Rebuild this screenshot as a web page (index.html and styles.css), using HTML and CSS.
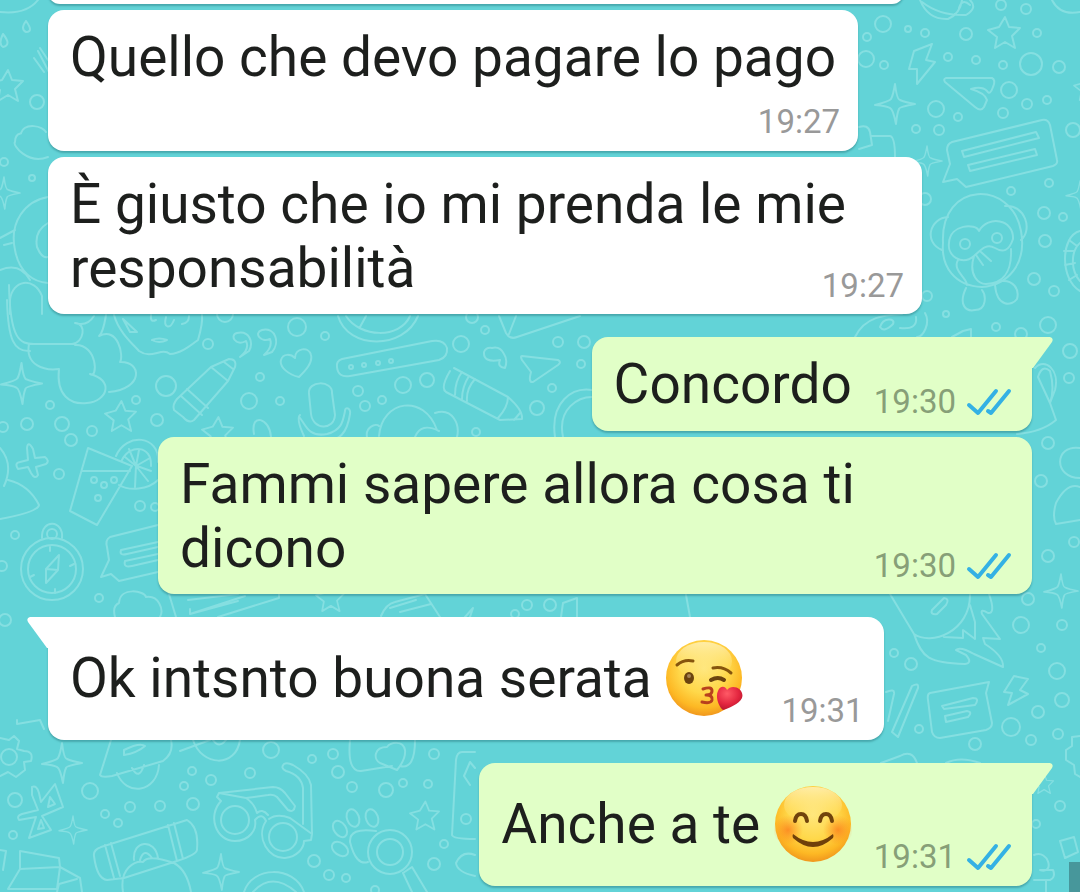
FILE: index.html
```html
<!DOCTYPE html>
<html lang="it">
<head>
<meta charset="utf-8">
<meta name="viewport" content="width=device-width, initial-scale=1">
<title>Chat</title>
<link rel="stylesheet" href="styles.css">
</head>
<body>
<svg class="defs" aria-hidden="true">
  <defs>
    <radialGradient id="face" cx="50%" cy="38%" r="64%">
      <stop offset="0" stop-color="#ffe67c"/><stop offset=".5" stop-color="#ffd84a"/><stop offset=".8" stop-color="#fdb824"/><stop offset="1" stop-color="#ee911c"/>
    </radialGradient>
    <linearGradient id="shine" x1="0" y1="0" x2="0" y2="1">
      <stop offset="0" stop-color="#fff3c0" stop-opacity=".8"/><stop offset="1" stop-color="#ffe671" stop-opacity="0"/>
    </linearGradient>
    <radialGradient id="blush"><stop offset="0" stop-color="#fb7a1c" stop-opacity=".75"/><stop offset="1" stop-color="#fb8a1c" stop-opacity="0"/></radialGradient>
    <radialGradient id="heart" cx="40%" cy="30%" r="75%"><stop offset="0" stop-color="#ff5a66"/><stop offset=".6" stop-color="#e3263f"/><stop offset="1" stop-color="#b5152c"/></radialGradient>
    <symbol id="ticks" viewBox="0 0 46 30"><path d="M3 18L12 26L30 4M22 24L25 26L43 4" fill="none" stroke="#34b1e4" stroke-width="4" stroke-linecap="round" stroke-linejoin="round"/></symbol>
    <symbol id="sparkle" viewBox="-20 -20 40 40" overflow="visible"><path d="M0-20Q2-4 5-4Q9-2 20 0Q4 3 4 5Q2 9 1 20Q-2 5-5 4Q-8 2-20 1Q-5-3-4-5Q-2-8 0-20Z"/></symbol>
    <symbol id="star" viewBox="-16 -16 32 32" overflow="visible"><path d="M1-16L5-6L16-5L8 3L11 15L1 9L-9 15L-7 4L-16-3L-5-6Z"/></symbol>
  </defs>
</svg>

<main class="chat">
  <svg class="wallpaper" viewBox="0 0 1080 892" preserveAspectRatio="xMinYMin slice" aria-hidden="true">
    <g class="dots">
      <circle cx="883" cy="24" r="8"/><circle cx="867" cy="37" r="4"/><circle cx="908" cy="29" r="3"/><circle cx="925" cy="33" r="4"/><circle cx="866" cy="59" r="8"/><circle cx="884" cy="65" r="4"/><circle cx="948" cy="57" r="4"/><circle cx="966" cy="34" r="6"/><circle cx="976" cy="60" r="4"/><circle cx="1001" cy="5" r="5"/><circle cx="1026" cy="9" r="5"/><circle cx="1037" cy="33" r="4"/><circle cx="1031" cy="64" r="11"/><circle cx="1059" cy="67" r="6"/><circle cx="1003" cy="65" r="4"/><circle cx="1009" cy="90" r="8"/><circle cx="1027" cy="104" r="5"/><circle cx="1047" cy="100" r="4"/><circle cx="1003" cy="113" r="5"/><circle cx="936" cy="109" r="8"/><circle cx="958" cy="117" r="4"/><circle cx="916" cy="129" r="4"/><circle cx="939" cy="130" r="5"/><circle cx="1073" cy="130" r="7"/><circle cx="1049" cy="183" r="4"/><circle cx="1011" cy="191" r="4"/><circle cx="925" cy="199" r="6"/><circle cx="1044" cy="213" r="6"/><circle cx="1063" cy="217" r="4"/><circle cx="1045" cy="241" r="6"/><circle cx="1034" cy="279" r="6"/><circle cx="1054" cy="291" r="5"/><circle cx="927" cy="296" r="5"/><circle cx="946" cy="314" r="3"/><circle cx="996" cy="327" r="4"/><circle cx="1021" cy="334" r="6"/><circle cx="1048" cy="325" r="8"/>
      <circle cx="37" cy="102" r="7"/><circle cx="4" cy="162" r="4"/><circle cx="32" cy="178" r="3"/><circle cx="208" cy="344" r="5"/><circle cx="225" cy="314" r="8"/><circle cx="297" cy="327" r="9"/><circle cx="325" cy="336" r="4"/><circle cx="166" cy="386" r="10"/><circle cx="260" cy="377" r="4"/><circle cx="249" cy="401" r="8"/><circle cx="280" cy="401" r="4"/><circle cx="50" cy="405" r="4"/><circle cx="136" cy="400" r="4"/><circle cx="157" cy="420" r="6"/><circle cx="62" cy="424" r="7"/><circle cx="27" cy="424" r="6"/><circle cx="3" cy="427" r="5"/><circle cx="92" cy="431" r="5"/><circle cx="71" cy="440" r="6"/><circle cx="59" cy="474" r="5"/><circle cx="94" cy="480" r="3"/><circle cx="104" cy="485" r="3"/><circle cx="114" cy="480" r="3"/><circle cx="98" cy="498" r="3"/><circle cx="140" cy="506" r="5"/><circle cx="155" cy="507" r="4"/><circle cx="15" cy="535" r="4"/><circle cx="2" cy="566" r="5"/><circle cx="99" cy="598" r="4"/><circle cx="5" cy="620" r="6"/>
      <circle cx="461" cy="344" r="8"/><circle cx="485" cy="330" r="4"/><circle cx="472" cy="317" r="6"/><circle cx="558" cy="342" r="5"/><circle cx="584" cy="342" r="6"/><circle cx="581" cy="364" r="4"/><circle cx="552" cy="388" r="4"/><circle cx="537" cy="408" r="7"/><circle cx="476" cy="432" r="4"/><circle cx="403" cy="385" r="8"/><circle cx="427" cy="380" r="7"/><circle cx="358" cy="391" r="5"/><circle cx="382" cy="400" r="4"/><circle cx="365" cy="406" r="5"/><circle cx="527" cy="605" r="5"/><circle cx="550" cy="605" r="6"/><circle cx="515" cy="614" r="4"/>
      <circle cx="1070" cy="351" r="7"/><circle cx="1069" cy="378" r="5"/><circle cx="1048" cy="443" r="6"/><circle cx="1041" cy="481" r="6"/><circle cx="1048" cy="556" r="6"/><circle cx="1074" cy="542" r="5"/><circle cx="1028" cy="599" r="6"/><circle cx="1021" cy="625" r="8"/><circle cx="1062" cy="625" r="5"/><circle cx="1041" cy="648" r="4"/><circle cx="1057" cy="671" r="8"/><circle cx="1062" cy="700" r="7"/><circle cx="1038" cy="712" r="6"/><circle cx="1011" cy="727" r="9"/><circle cx="1031" cy="740" r="5"/><circle cx="1058" cy="734" r="5"/><circle cx="975" cy="744" r="6"/><circle cx="919" cy="729" r="4"/><circle cx="894" cy="653" r="4"/><circle cx="911" cy="664" r="6"/><circle cx="1060" cy="806" r="5"/><circle cx="1036" cy="824" r="4"/>
      <circle cx="9" cy="757" r="8"/><circle cx="15" cy="800" r="7"/><circle cx="13" cy="835" r="4"/><circle cx="90" cy="791" r="8"/><circle cx="105" cy="814" r="4"/><circle cx="118" cy="823" r="4"/><circle cx="130" cy="807" r="5"/><circle cx="160" cy="806" r="5"/><circle cx="193" cy="804" r="6"/><circle cx="184" cy="786" r="4"/><circle cx="192" cy="771" r="4"/><circle cx="211" cy="780" r="5"/><circle cx="250" cy="773" r="5"/><circle cx="271" cy="750" r="8"/><circle cx="312" cy="759" r="4"/><circle cx="333" cy="754" r="5"/><circle cx="338" cy="772" r="6"/><circle cx="352" cy="787" r="5"/><circle cx="386" cy="790" r="7"/><circle cx="403" cy="783" r="4"/><circle cx="428" cy="784" r="4"/><circle cx="434" cy="754" r="5"/><circle cx="466" cy="819" r="5"/><circle cx="444" cy="844" r="4"/><circle cx="434" cy="864" r="6"/><circle cx="314" cy="861" r="6"/><circle cx="329" cy="875" r="5"/><circle cx="346" cy="878" r="4"/><circle cx="375" cy="890" r="4"/>
    </g>
    <use href="#sparkle" x="875" y="84" width="40" height="40"/><use href="#sparkle" x="912" y="144" width="30" height="34"/><use href="#sparkle" x="1" y="363" width="41" height="41"/><use href="#sparkle" x="1044" y="574" width="34" height="34"/><use href="#sparkle" x="42" y="743" width="40" height="40"/><use href="#sparkle" x="59" y="816" width="28" height="28"/><use href="#sparkle" x="203" y="854" width="36" height="36"/><use href="#sparkle" x="-12" y="177" width="32" height="32"/><use href="#sparkle" x="1066" y="180" width="28" height="30"/>
    <use href="#star" x="988" y="17" width="32" height="32"/><use href="#star" x="-9" y="70" width="32" height="32"/><use href="#star" x="105" y="401" width="31" height="31"/><use href="#star" x="202" y="417" width="31" height="31"/><use href="#star" x="410" y="801" width="29" height="30"/><use href="#star" x="316" y="584" width="28" height="28"/><use href="#star" x="1074" y="75" width="26" height="26"/><use href="#star" x="1030" y="774" width="27" height="20"/>
    <g>
      <path d="M920 0Q928 20 948 19Q960 14 962 0M922 2Q940 16 966 15Q978 8 970 0M959 8Q962-2 970 5"/>
      <path d="M1052 0Q1060 16 1080 12M932 44L914 51L909 69L917 69L917 84L935 62L926 60Z"/>
      <path d="M946 78H992Q996 80 993 87Q990 96 987 91Q982 86 971 89Q985 93 987 100L984 107Q981 112 975 107L945 82Q943 79 946 78"/>
      <path d="M952 142L1042 120Q1048 119 1050 125L1057 160Q1058 164 1053 166L966 187L957 179L943 182L950 164L947 150Q947 144 952 142M962 151L1036 132L1039 138L964 157ZM968 165L1035 149L1037 155L970 171Z"/>
      <path d="M859 127Q868 124 870 132L872 145L859 149M872 136H890Q895 137 895 157"/>
      <path d="M943 243C940 180 1012 180 1021 231C1027 264 1008 285 982 287C955 286 941 267 943 243M948 217C930 218 923 242 942 250M1005 206C1025 204 1033 230 1021 240M949 243C950 224 976 223 979 231C988 215 1014 219 1013 239C1009 251 1003 253 995 248C986 243 981 250 974 256C962 266 947 256 949 243M974 256C968 276 979 284 986 284C1004 283 1012 272 1011 249M958 260C952 270 967 278 967 285M976 255L983 265M981 252L991 261"/><circle cx="965" cy="244" r="5"/><circle cx="997" cy="238" r="5"/>
      <path d="M966 288C958 305 966 312 975 310C987 310 986 295 982 290M995 285C997 308 1012 306 1017 299C1020 288 1012 280 1002 281"/>
      <path d="M855 337C865 316 886 315 902 314M925 313C931 323 923 337 917 337M880 327C883 317 896 318 893 324Q884 333 880 327M900 328Q918 330 916 317M952 337L963 331L971 329V337"/>
      <path d="M1080 231C1060 236 1060 280 1080 291M1080 243C1070 252 1071 271 1080 281M1064 251H1074M1065 265L1075 263M1069 280L1077 275M1069 240L1077 246"/>
      <path d="M0 12Q26 15 38 0M26 21Q20 29 26 32Q34 32 26 21M3 34Q-2 44 3 47Q12 45 3 34M38 51L50 74M34 58L44 72M40 48L48 60"/>
      <path d="M48 157C28 165 12 145 15 142C15 132 22 134 21 133C25 122 43 126 46 132M48 197C25 201 9 222 15 250C19 272 33 282 48 283M48 223Q34 231 37 247Q42 259 48 257M0 238L15 230M4 245L12 243M0 270Q20 262 30 280M10 314V300C12 280 34 276 42 296V314"/>
      <path d="M7 300C8 340 14 352 30 351M9 285C10 340 20 344 34 344H72C84 343 87 323 75 323Q87 327 94 316M29 344C25 365 44 371 59 369C56 395 70 405 87 403C108 401 114 380 90 374C98 380 98 344 75 345M106 315Q103 333 99 336C118 326 124 356 120 362C142 361 144 389 109 392"/>
      <path d="M114 315C119 333 134 345 139 351C152 360 161 347 170 354C180 354 190 346 198 340Q203 323 202 315M123 319L137 332L130 332ZM151 315Q150 323 156 320M166 317C163 328 170 330 174 320M182 324Q189 323 189 316M152 340Q159 337 167 340Q159 344 152 340"/>
      <path d="M240 357Q250 349 246 341C236 347 229 335 237 333C249 330 254 342 249 351ZM264 355Q273 347 270 339C261 343 253 333 262 330C276 327 280 343 272 352ZM299 377C289 375 279 367 281 360C283 353 291 354 295 358C295 348 309 346 311 355C313 363 305 371 299 377Z"/>
      <path d="M211 367L229 359Q237 359 235 367L228 381L194 420Q189 424 183 417L174 410Q172 405 177 399ZM211 367L228 381M181 396L202 415M187 389L208 408M224 362L233 369"/>
      <path d="M338 316C348 350 404 350 418 316M346 316C360 338 400 339 410 316M366 316L360 327M499 316L506 333Q510 340 517 337L580 316M516 316L509 334"/>
      <path d="M342 359L432 341Q444 339 447 348Q448 357 439 360L350 376Q338 378 337 367Q336 361 342 359"/><circle cx="351" cy="367" r="2"/><circle cx="364" cy="365" r="2"/><circle cx="378" cy="363" r="2"/><circle cx="391" cy="361" r="2"/>
      <path d="M492 348Q500 346 504 354Q508 360 505 368Q497 367 500 360Q483 363 484 352Q486 347 492 348M522 356L558 360Q562 362 558 365L533 382Q528 383 531 372L522 360Q520 356 522 356Z"/>
      <path d="M454 368L508 397Q523 410 522 419L500 420L446 392Q440 388 450 371M462 372Q455 381 455 395M469 376Q462 387 462 399M475 379Q466 389 467 401M508 397Q508 407 498 418M520 413L514 420"/>
      <path d="M309 394C307 380 333 380 332 393L335 415C334 431 313 430 311 414ZM299 417C305 422 307 438 327 434C342 430 343 421 345 411C345 406 351 408 350 414C347 434 339 440 326 442M300 415Q296 419 304 436"/>
      <path d="M379 436C382 400 424 393 437 430M367 437C365 427 376 423 379 426M435 413C453 407 460 425 457 437M415 437Q421 422 439 431M254 434C250 412 270 418 271 437M555 437C550 402 572 387 592 390M563 437C557 408 579 397 592 397"/>
      <path d="M88 448L132 466L97 525L70 511ZM82 471H130M116 456C126 432 160 435 158 462M122 460C130 444 152 445 151 466M119 485C129 491 148 490 158 480M137 466L151 471M136 466L150 458M136 466L139 450M136 466L129 449M136 466L148 481M136 466L135 487M136 466L125 457"/>
      <path d="M27 448Q28 440 33 449L35 458L45 457Q50 461 46 464L36 467L38 475Q35 480 31 473L28 467L18 469Q14 463 20 462L28 460ZM0 448Q14 464 4 486M8 480Q29 485 39 505Q38 512 0 519"/>
      <circle cx="52" cy="569" r="31"/><circle cx="52" cy="569" r="24"/><circle cx="52" cy="534" r="5"/><path d="M42 538C41 518 64 520 62 538M59 555L46 569V583L58 570ZM46 569L58 570M50 547V551M55 589V593M30 577L34 575M70 566L74 564"/>
      <path d="M158 525L110 537Q105 540 107 547L109 560L101 577L111 574L119 581L158 572M158 542L121 550Q119 556 127 554L158 547M158 554L125 561Q123 568 132 566L158 560"/>
      <path d="M115 617Q112 606 119 603C120 586 145 591 146 597C159 595 164 610 160 617M169 594L176 617M188 600L238 594M190 609L190 614L245 596M190 614L238 601M218 617L279 598V594M381 616Q386 604 395 602L425 594L440 617M416 600L390 608M400 612L431 604M465 617L473 608L470 617M561 617L563 603L577 598V617M686 595L690 617"/>
      <path d="M890 594L914 634C931 646 970 632 970 595M914 634C922 658 929 663 965 664Q973 663 966 655L956 650Q960 646 974 654L1003 667Q1004 656 985 644L983 638L1000 639L982 614Q980 608 988 613Q996 614 989 594M970 605L975 622V639L963 630V638L944 637M932 610L944 598Q950 599 946 605L937 614Q930 615 932 610"/>
      <path d="M886 692Q895 688 894 694L888 721M892 732L912 686Q919 682 918 688L898 737ZM930 693L989 682L986 693L992 723Q992 728 986 730L940 738Q934 738 932 732L928 700Q927 694 930 693M942 706L973 698Q980 698 975 705L944 709ZM945 716L967 711Q973 712 968 717L946 722ZM1014 676L1004 692L1012 693L1008 705L1028 694L1020 690L1028 679Z"/>
      <path d="M1080 736L1072 737V746L1066 750V760L1074 765L1075 774L1080 777M1060 841L1074 837L1078 852L1065 858ZM1034 855C1049 849 1055 875 1040 870H1053Q1056 877 1050 880H1034M1046 880V892M881 763L900 756Q912 749 917 763M946 763Q960 756 980 763M1035 368C1045 357 1060 370 1055 390L1050 403L1056 420Q1042 432 1017 434M1038 377Q1042 364 1050 371Q1055 389 1050 403ZM1080 448C1054 444 1053 478 1080 478M1080 487Q1067 482 1056 503Q1052 517 1056 524L1080 520"/>
      <path d="M0 738L9 740L14 736L19 741L17 749L24 751Q34 751 31 761L24 762L25 770L16 777L8 772L0 776M17 720V724L40 720L44 729"/>
      <path d="M32 787Q37 785 39 793L41 802L55 784L63 807L42 816L51 830L29 838L36 817L19 820Q16 816 22 814L38 810L32 795ZM50 797L55 804L48 807ZM41 820L44 828L38 829Z"/>
      <path d="M111 740L100 775Q102 778 112 776L163 761Q174 753 171 740M117 773C126 797 157 793 159 765M132 768Q139 781 144 765M124 750Q140 742 145 746Q137 753 124 755ZM180 751L210 740M193 740C202 767 236 768 240 740M213 740Q219 749 226 740"/>
      <path d="M350 740Q347 772 361 771L392 766M415 740Q415 770 400 766M387 747C374 747 373 759 380 763L397 770Q406 759 405 750C403 740 391 742 387 747Z"/>
      <circle cx="235" cy="820" r="14"/><circle cx="283" cy="837" r="14"/>
      <path d="M221 801L217 797L219 793L246 798Q254 803 257 813Q262 808 268 815M221 801C207 816 216 841 235 841C249 841 257 830 255 820Q262 812 266 821C255 838 269 859 285 858C297 857 304 848 304 841L311 840L312 834L290 818Q277 813 269 819M219 793L273 787Q280 787 285 793L295 806Q294 813 288 810L277 797Q274 794 268 795L246 798M284 764Q287 762 293 765Q309 774 311 785L312 834M284 764Q280 768 286 771Q301 775 303 788V824"/>
      <path d="M101 847L187 820Q199 827 197 849Q198 854 177 861L124 878L107 880Q97 879 94 856Q93 850 101 847M105 845L114 878M111 843L120 876M168 825L177 861M174 823L183 859M134 860C132 840 155 838 158 858M140 860Q144 847 152 858M123 892C119 867 136 861 143 862Q148 854 174 863Q187 870 191 892"/>
      <path d="M20 860V851L59 858L60 867L20 869ZM20 869L8 889H57L60 867L80 878L82 892M57 892L59 884L77 879M0 850L6 851L3 870"/>
      <circle cx="390" cy="852" r="22"/><circle cx="390" cy="852" r="13"/>
      <ellipse cx="353" cy="818" rx="6" ry="9" transform="rotate(-20 353 818)"/><ellipse cx="372" cy="818" rx="6" ry="9" transform="rotate(-20 372 818)"/><ellipse cx="340" cy="829" rx="6" ry="9" transform="rotate(-35 340 829)"/><ellipse cx="340" cy="849" rx="6" ry="9" transform="rotate(-55 340 849)"/>
      <path d="M376 831Q349 827 350 842Q356 866 368 862M403 873L412 867L427 892M403 873L412 892M244 892C252 866 294 865 304 892M253 892Q272 871 296 892M475 752H462Q457 752 456 760L452 835Q453 839 475 839M470 785L464 776L470 762L475 768M475 855Q462 850 456 863Q457 872 475 876"/>
    </g>
  </svg>

  <div class="bubble in previous"></div>

  <article class="bubble in stacked">
    <p class="text">Quello che devo pagare lo pago</p>
    <footer class="meta"><time datetime="19:27">19:27</time></footer>
  </article>

  <article class="bubble in wrapped">
    <p class="text">È giusto che io mi prenda le mie responsabilità</p>
    <footer class="meta"><time datetime="19:27">19:27</time></footer>
  </article>

  <article class="bubble out first">
    <svg class="tail" viewBox="0 0 21 32" aria-hidden="true"><path d="M0 0H18Q22 1 20 5L1 31H0Z"/></svg>
    <p class="text">Concordo</p>
    <footer class="meta"><time datetime="19:30">19:30</time><svg class="ticks" role="img" aria-label="Letto"><use href="#ticks"/></svg></footer>
  </article>

  <article class="bubble out wrapped">
    <p class="text">Fammi sapere allora cosa ti dicono</p>
    <footer class="meta"><time datetime="19:30">19:30</time><svg class="ticks" role="img" aria-label="Letto"><use href="#ticks"/></svg></footer>
  </article>

  <article class="bubble in first">
    <svg class="tail" viewBox="0 0 21 32" aria-hidden="true"><path d="M21 0H3Q-1 1 1 5L20 31H21Z"/></svg>
    <p class="text">Ok intsnto buona serata <svg class="emoji" viewBox="0 0 78 78" role="img" aria-label="Faccina che manda un bacio">
      <circle cx="39" cy="39" r="38" fill="url(#face)"/><ellipse cx="39" cy="22" rx="28" ry="19" fill="url(#shine)"/>
      <path d="M12 26Q19 20 28 22M48 29Q58 27 66 34" fill="none" stroke="#86550d" stroke-width="3" stroke-linecap="round"/>
      <ellipse cx="24" cy="39" rx="5" ry="6" fill="#6b430f"/><circle cx="24" cy="37" r="2" fill="#a58357"/>
      <path d="M46 41Q53 37 59 41" fill="none" stroke="#6b430f" stroke-width="4" stroke-linecap="round"/>
      <path d="M38 50Q47 47 47 52Q47 56 41 56Q48 56 47 61Q46 65 37 63" fill="none" stroke="#b8401d" stroke-width="3" stroke-linecap="round" stroke-linejoin="round"/>
      <path d="M62 51C67 44 80 50 77 59C74 65 64 69 58 71C54 68 50 58 53 52C55 46 61 47 62 51Z" fill="url(#heart)"/>
    </svg></p>
    <footer class="meta"><time datetime="19:31">19:31</time></footer>
  </article>

  <article class="bubble out first">
    <svg class="tail" viewBox="0 0 21 32" aria-hidden="true"><path d="M0 0H18Q22 1 20 5L1 31H0Z"/></svg>
    <p class="text">Anche a te <svg class="emoji" viewBox="0 0 78 78" role="img" aria-label="Faccina sorridente">
      <circle cx="39" cy="39" r="38" fill="url(#face)"/><ellipse cx="39" cy="20" rx="29" ry="18" fill="url(#shine)"/>
      <circle cx="14" cy="45" r="15" fill="url(#blush)"/><circle cx="64" cy="45" r="15" fill="url(#blush)"/>
      <path d="M21 36Q22 29 27 29Q32 29 33 36M46 36Q47 29 52 29Q57 29 58 36" fill="none" stroke="#70430c" stroke-width="4" stroke-linecap="round"/>
      <path d="M19 49Q39 65 59 49Q60 51 59 53Q39 71 19 53Q18 51 19 49Z" fill="#70400a"/>
    </svg></p>
    <footer class="meta"><time datetime="19:31">19:31</time><svg class="ticks" role="img" aria-label="Letto"><use href="#ticks"/></svg></footer>
  </article>

  <span class="overlay-edge"></span>
</main>
</body>
</html>
```
FILE: styles.css
```css
* {
  box-sizing: border-box;
}

body {
  margin: 0;
  background: #62d3d7;
  font-family: Roboto, sans-serif;
}

.defs {
  position: absolute;
  width: 0;
  height: 0;
}

.chat {
  position: relative;
  display: flex;
  flex-direction: column;
  align-items: flex-start;
  gap: 6px;
  min-height: 100vh;
  padding: 0 48px 5px;
  overflow: hidden;
}

.wallpaper {
  position: absolute;
  inset: 0;
  width: 100%;
  height: 100%;
  fill: none;
  stroke: #85dfe1;
  stroke-width: 2px;
  stroke-linejoin: round;
  stroke-linecap: round;
}

.bubble {
  --fill: #ffffff;
  position: relative;
  display: flex;
  align-items: flex-end;
  gap: 16px;
  max-width: min(874px, 100%);
  padding: 15px 20px 10px 0;
  border-radius: 16px;
  background: var(--fill);
  box-shadow: 0 2px 2px rgba(20, 90, 95, 0.35);
}

.out {
  --fill: #e1ffc7;
  align-self: flex-end;
  gap: 0;
}

.previous {
  width: 87%;
  height: 24px;
  margin-top: -20px;
  padding: 0;
}

.first {
  margin-top: 17px;
}

.first.out {
  border-top-right-radius: 0;
}

.first.in {
  border-top-left-radius: 0;
}

.stacked {
  flex-direction: column;
  gap: 8px;
  padding-right: 0;
}

.stacked .meta {
  margin-right: 18px;
}

.wrapped {
  display: grid;
  align-items: end;
  padding-right: 0;
  padding-bottom: 9px;
}

.wrapped .text,
.wrapped .meta {
  grid-area: 1 / 1;
}

.wrapped .meta {
  justify-self: end;
  margin-right: 18px;
}

.wrapped.out .meta {
  margin-right: 20px;
}

.text {
  margin: 0;
  padding: 0 22px 5px;
  color: #1d1f1d;
  font-size: 55px;
  line-height: 64px;
}

.meta {
  display: flex;
  align-items: center;
  gap: 10px;
  color: #999999;
  font-size: 33px;
  line-height: 39px;
}

.out .meta {
  color: #879f78;
}

.ticks {
  width: 46px;
  height: 30px;
}

.tail {
  position: absolute;
  top: 0;
  width: 21px;
  height: 32px;
  fill: var(--fill);
}

.out .tail {
  left: 100%;
}

.in .tail {
  right: 100%;
}

.emoji {
  width: 78px;
  height: 78px;
  margin: 7px 0 8px;
  vertical-align: -28px;
}

.overlay-edge {
  position: absolute;
  right: 0;
  bottom: 0;
  width: 11px;
  height: 30px;
  background: #47979b;
}
```
